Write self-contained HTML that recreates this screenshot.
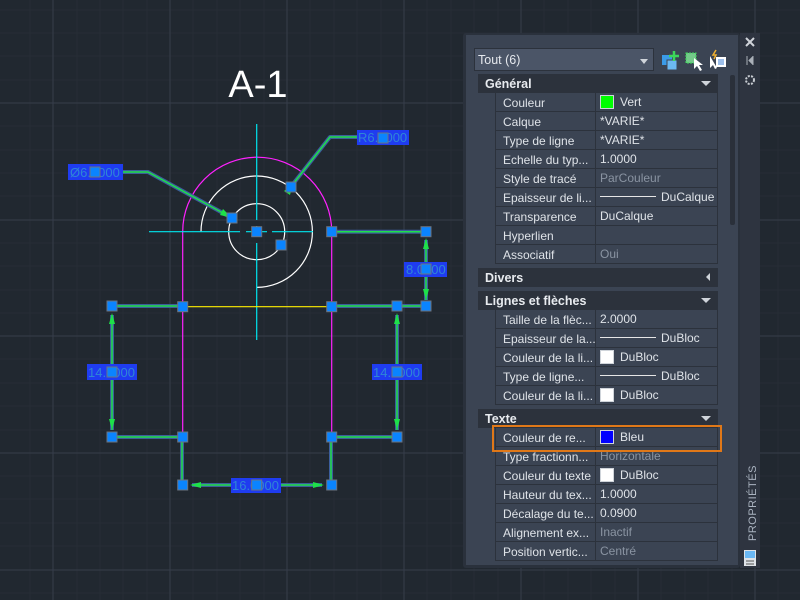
<!DOCTYPE html>
<html><head><meta charset="utf-8"><style>
*{margin:0;padding:0;box-sizing:border-box}
body{width:800px;height:600px;overflow:hidden;background:#212830;font-family:"Liberation Sans",sans-serif;position:relative}
svg{position:absolute;left:0;top:0}
.a{position:absolute}
.pal{left:463px;top:33px;width:277px;height:535px;background:#2a313c;border-radius:3px}
.in{left:466px;top:35px;width:272px;height:530px;background:#3b4453}
.dd{left:474px;top:48px;width:180px;height:23px;background:#4b5567;border:1px solid #2c323c;color:#e6e9ee;font-size:12.5px;padding:4px 0 0 3px}
.dd:after{content:"";position:absolute;right:5px;top:10px;border:4px solid transparent;border-top:5px solid #cfd4da}
.hd{position:absolute;left:478px;width:240px;height:19px;background:#2c323c;color:#e8ebef;font-size:12.5px;font-weight:bold;padding:3px 0 0 7px}
.hd i{position:absolute;right:7px;top:7px;border:5px solid transparent;border-top:5px solid #cfd4da;border-bottom:0}
.hd b.l{position:absolute;right:8px;top:5px;border:4px solid transparent;border-right:4px solid #cfd4da;border-left:0}
.r{position:absolute;left:495px;width:223px;height:19px;border-bottom:1px solid #2c323c;border-left:1px solid #2c323c;border-right:1px solid #2c323c;font-size:12px;color:#dfe3e8}
.r .k{position:absolute;left:0;top:0;width:100px;height:18px;border-right:1px solid #2c323c;padding:3px 0 0 7px;white-space:nowrap;overflow:hidden}
.r .v{position:absolute;left:101px;top:0;padding:2px 0 0 3px;white-space:nowrap}
.g{color:#8a94a2}
.sw{display:inline-block;width:14px;height:14px;border:1px solid #cfd4da;vertical-align:-3px;margin-right:6px}
.ln{display:inline-block;width:56px;height:1px;background:#e6e6e6;vertical-align:4px;margin-right:5px}
</style></head><body>
<svg width="800" height="600">
<g stroke="#262d36" stroke-width="1">
<path d="M30 0V600M77 0V600M100 0V600M123 0V600M147 0V600M193 0V600M217 0V600M240 0V600M264 0V600M310 0V600M334 0V600M357 0V600M381 0V600M427 0V600M451 0V600M474 0V600M498 0V600M544 0V600M568 0V600M591 0V600M615 0V600M661 0V600M685 0V600M708 0V600M732 0V600M778 0V600"/>
<path d="M0 10H800M0 33H800M0 56H800M0 80H800M0 126H800M0 150H800M0 173H800M0 196H800M0 243H800M0 266H800M0 290H800M0 313H800M0 359H800M0 383H800M0 406H800M0 430H800M0 476H800M0 499H800M0 523H800M0 546H800M0 593H800"/>
</g>
<g stroke="#363e4a" stroke-width="1">
<path d="M53 0V600M170 0V600M287 0V600M404 0V600M521 0V600M638 0V600M755 0V600M0 103H800M0 220H800M0 336H800M0 453H800M0 570H800"/>
</g>
<text x="258" y="97" fill="#fff" font-size="38" text-anchor="middle" font-family="Liberation Sans">A-1</text>
<g fill="none" stroke-width="1.2">
<path d="M182.7 485V231.7A74.5 74.5 0 0 1 331.7 231.7V485" stroke="#ff22ff"/>
<circle cx="256.7" cy="231.7" r="28" stroke="#fff"/>
<path d="M201 231.7A55.7 55.7 0 1 1 256.7 287.4" stroke="#fff"/>
<path d="M256.7 124V220M256.7 226V237M256.7 243V340M149 231.7H240M246 231.7H267M272 231.7H313" stroke="#00e5ee"/>
<path d="M182.7 306.7H331.7" stroke="#ffee00"/>
</g>
<g fill="none" stroke="#3c5d9c" stroke-width="4" stroke-linejoin="round">
<path d="M120 172H148L232 218M409 137H330L293 184M112 306H182M331 306H426M331 231.7H426M426 240V300M112 315V430M112 437H182M331 437H397M397 315V430M182 437V485M331 437V485M192 485H322"/>
</g>
<g fill="none" stroke="#1ee04a" stroke-width="1.5">
<path d="M120 172H148L232 218M409 137H330L293 184M112 306H182M331 306H426M331 231.7H426M426 240V300M112 315V430M112 437H182M331 437H397M397 315V430M182 437V485M331 437V485M192 485H322"/>
</g>
<g fill="#1ee04a">
<path d="M232 218l-12-3 3-6z M293 184l-3 11-6-4z M426 238l-3 11h6z M426 300l-3-11h6z M112 313l-3 11h6z M112 430l-3-11h6z M397 313l-3 11h6z M397 430l-3-11h6z M190 485l11-3v6z M324 485l-11-3v6z"/>
</g>
<g font-family="Liberation Sans" font-size="13" fill="#2f86d6">
<rect x="68" y="164" width="55" height="16" fill="#1f3cf0"/><text x="70" y="177">Ø6.0000</text>
<rect x="357" y="130" width="52" height="15" fill="#1f3cf0"/><text x="358" y="142">R6.0000</text>
<rect x="404" y="262" width="43" height="15" fill="#1f3cf0"/><text x="406" y="274">8.0000</text>
<rect x="87" y="364" width="50" height="16" fill="#1f3cf0"/><text x="88" y="377">14.0000</text>
<rect x="372" y="364" width="50" height="16" fill="#1f3cf0"/><text x="373" y="377">14.0000</text>
<rect x="231" y="478" width="50" height="15" fill="#1f3cf0"/><text x="232" y="490">16.0000</text>
</g>
<g fill="#0a84ff" stroke="#6b7380" stroke-width="1">
<rect x="107" y="301" width="10" height="10"/><rect x="177.7" y="301.7" width="10" height="10"/><rect x="326.7" y="301.7" width="10" height="10"/><rect x="392" y="301" width="10" height="10"/><rect x="421" y="301" width="10" height="10"/>
<rect x="421" y="226.7" width="10" height="10"/><rect x="326.7" y="226.7" width="10" height="10"/><rect x="251.7" y="226.7" width="10" height="10"/><rect x="227" y="213" width="10" height="10"/><rect x="286" y="182" width="10" height="10"/><rect x="276" y="240" width="10" height="10"/>
<rect x="107" y="432" width="10" height="10"/><rect x="177.7" y="432" width="10" height="10"/><rect x="326.7" y="432" width="10" height="10"/><rect x="392" y="432" width="10" height="10"/>
<rect x="177.7" y="480" width="10" height="10"/><rect x="326.7" y="480" width="10" height="10"/>
<rect x="107" y="367" width="10" height="10"/><rect x="392" y="367" width="10" height="10"/><rect x="421" y="264" width="10" height="10"/><rect x="251.7" y="480" width="10" height="10"/><rect x="90" y="167" width="10" height="10"/><rect x="378" y="133" width="10" height="10"/>
</g>
</svg>
<div class="a pal"></div>
<div class="a" style="left:740px;top:33px;width:20px;height:535px;background:#2e3440"></div>
<div class="a in"></div>
<div class="a dd">Tout (6)</div>
<svg width="800" height="600" style="pointer-events:none">
<rect x="662" y="55" width="10" height="10" fill="#3b9be8"/><rect x="667" y="60" width="10" height="10" fill="#6cb8f0" stroke="#3b4453"/>
<path d="M674 51v10M669 56h10" stroke="#3cd65a" stroke-width="2.5"/>
<rect x="686" y="53" width="10" height="10" fill="#74c98a" stroke="#3cd65a" stroke-dasharray="2 1"/>
<path d="M694 58l0 11 3-3 3 5 2-1-3-5h4z" fill="#fff"/>
<path d="M710 56l0 12 3-3 2 4 2-1" fill="#fff"/><path d="M716 50l-3 5h3l-2 4" stroke="#f0b030" fill="none" stroke-width="1.5"/>
<rect x="716" y="57" width="10" height="10" fill="#fff"/><path d="M718 60h6M718 62h6M718 64h6" stroke="#3b7fd6"/>
<path d="M746 38l8 8M754 38l-8 8" stroke="#d0d4da" stroke-width="2"/>
<path d="M747 56v9M753 56v9M749 60.5l3-3v6z" stroke="#aab0b8" fill="#aab0b8"/>
<circle cx="750" cy="80" r="4" fill="none" stroke="#c8ccd2" stroke-width="2" stroke-dasharray="2 1.3"/>
<rect x="744" y="550" width="12" height="16" fill="#dfe3e8"/><rect x="745" y="551" width="10" height="7" fill="#6ab8f5"/>
<path d="M746 561h8M746 564h8" stroke="#555" stroke-width="1"/>
<text transform="translate(756,541) rotate(-90)" fill="#aab3c0" font-size="11" font-family="Liberation Sans" letter-spacing="0.5">PROPRIÉTÉS</text>
</svg>
<div class="a" style="left:730px;top:75px;width:5px;height:150px;background:#2a303a;border-radius:2px"></div>
<div class="hd" style="top:74px">Général<i></i></div>
<div class="r" style="top:93px"><div class="k">Couleur</div><div class="v"><span class="sw" style="background:#00ff00"></span>Vert</div></div>
<div class="r" style="top:112px"><div class="k">Calque</div><div class="v">*VARIE*</div></div>
<div class="r" style="top:131px"><div class="k">Type de ligne</div><div class="v">*VARIE*</div></div>
<div class="r" style="top:150px"><div class="k">Echelle du typ...</div><div class="v">1.0000</div></div>
<div class="r" style="top:169px"><div class="k">Style de tracé</div><div class="v g">ParCouleur</div></div>
<div class="r" style="top:188px"><div class="k">Epaisseur de li...</div><div class="v"><span class="ln"></span>DuCalque</div></div>
<div class="r" style="top:207px"><div class="k">Transparence</div><div class="v">DuCalque</div></div>
<div class="r" style="top:226px"><div class="k">Hyperlien</div><div class="v"></div></div>
<div class="r" style="top:245px"><div class="k">Associatif</div><div class="v g">Oui</div></div>
<div class="hd" style="top:268px">Divers<b class="l"></b></div>
<div class="hd" style="top:291px">Lignes et flèches<i></i></div>
<div class="r" style="top:310px"><div class="k">Taille de la flèc...</div><div class="v">2.0000</div></div>
<div class="r" style="top:329px"><div class="k">Epaisseur de la...</div><div class="v"><span class="ln"></span>DuBloc</div></div>
<div class="r" style="top:348px"><div class="k">Couleur de la li...</div><div class="v"><span class="sw" style="background:#fff"></span>DuBloc</div></div>
<div class="r" style="top:367px"><div class="k">Type de ligne...</div><div class="v"><span class="ln"></span>DuBloc</div></div>
<div class="r" style="top:386px"><div class="k">Couleur de la li...</div><div class="v"><span class="sw" style="background:#fff"></span>DuBloc</div></div>
<div class="hd" style="top:409px">Texte<i></i></div>
<div class="r" style="top:428px"><div class="k">Couleur de re...</div><div class="v"><span class="sw" style="background:#0000ff"></span>Bleu</div></div>
<div class="r" style="top:447px"><div class="k">Type fractionn...</div><div class="v g">Horizontale</div></div>
<div class="r" style="top:466px"><div class="k">Couleur du texte</div><div class="v"><span class="sw" style="background:#fff"></span>DuBloc</div></div>
<div class="r" style="top:485px"><div class="k">Hauteur du tex...</div><div class="v">1.0000</div></div>
<div class="r" style="top:504px"><div class="k">Décalage du te...</div><div class="v">0.0900</div></div>
<div class="r" style="top:523px"><div class="k">Alignement ex...</div><div class="v g">Inactif</div></div>
<div class="r" style="top:542px"><div class="k">Position vertic...</div><div class="v g">Centré</div></div>
<div class="a" style="left:492px;top:425px;width:230px;height:27px;border:2px solid #e07818"></div>
</body></html>
